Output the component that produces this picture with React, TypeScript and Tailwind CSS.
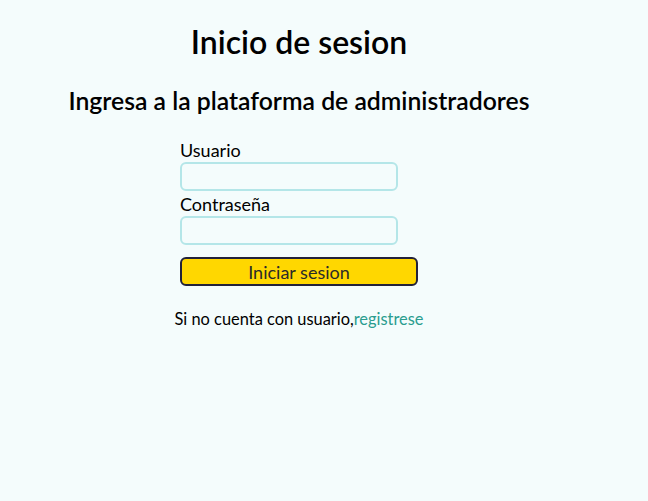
const Login = () => {
  return (
    <div className="min-h-[501px] bg-[#f4fcfc] font-['Lato',sans-serif] text-black">
      <div className="w-[598px] flex flex-col items-center">
        <h1 className="mt-[22px] text-[32px] leading-[40px] font-semibold">Inicio de sesion</h1>
        <h2 className="mt-[24px] text-[24.75px] leading-[30px] font-semibold">Ingresa a la plataforma de administradores</h2>
        <form className="mt-[23px] w-[238px] flex flex-col">
          <label htmlFor="usuario" className="text-[18px] leading-[23px]">Usuario</label>
          <input
            id="usuario"
            type="text"
            className="w-[218px] h-[29px] border-2 border-[#b4e6e8] rounded-md bg-transparent focus:outline-none"
          />
          <label htmlFor="clave" className="mt-[2px] text-[18px] leading-[23px]">Contraseña</label>
          <input
            id="clave"
            type="password"
            className="w-[218px] h-[29px] border-2 border-[#b4e6e8] rounded-md bg-transparent focus:outline-none"
          />
          <button
            type="button"
            className="mt-[12px] h-[29px] bg-[#ffd700] border-2 border-[#22223a] rounded-md text-[18px] leading-[24px] text-[#2a2a2a]"
          >
            Iniciar sesion
          </button>
        </form>
        <p className="mt-[21px] text-[16.4px]">
          Si no cuenta con usuario,<a href="#" className="text-[#2a9d8f]">registrese</a>
        </p>
      </div>
    </div>
  );
};

export default Login;
